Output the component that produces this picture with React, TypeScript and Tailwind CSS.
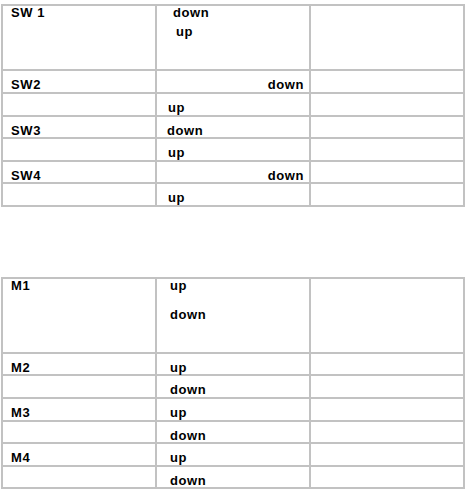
const cell = "bg-white";

function Lines({ children, className = "" }: { children?: React.ReactNode; className?: string }) {
  return <div className={`${cell} ${className}`}>{children}</div>;
}

export default function App() {
  return (
    <div className="w-[466px] h-[489px] bg-white font-['Liberation_Sans',Arial,sans-serif] text-[13px] leading-[13px] font-bold tracking-[0.6px] text-black">
      {/* switches */}
      <div className="ml-[1px] mt-[4px] w-[464px] grid grid-cols-[152px_152px_152px] grid-rows-[63px_21px_21px_20px_21px_20px_21px] gap-[2px] p-[2px] bg-[#c2c2c2]">
        <Lines className="pl-[8px]">SW 1</Lines>
        <Lines className="flex flex-col">
          <span className="pl-[16px]">down</span>
          <span className="pl-[19px] mt-[6px]">up</span>
        </Lines>
        <Lines />

        <Lines className="pl-[8px] pt-[7px]">SW2</Lines>
        <Lines className="pr-[5px] pt-[7px] text-right">down</Lines>
        <Lines />

        <Lines />
        <Lines className="pl-[11px] pt-[7px]">up</Lines>
        <Lines />

        <Lines className="pl-[8px] pt-[7px]">SW3</Lines>
        <Lines className="pl-[10px] pt-[7px]">down</Lines>
        <Lines />

        <Lines />
        <Lines className="pl-[11px] pt-[7px]">up</Lines>
        <Lines />

        <Lines className="pl-[8px] pt-[7px]">SW4</Lines>
        <Lines className="pr-[5px] pt-[7px] text-right">down</Lines>
        <Lines />

        <Lines />
        <Lines className="pl-[11px] pt-[7px]">up</Lines>
        <Lines />
      </div>

      {/* motors */}
      <div className="ml-[1px] mt-[70px] w-[464px] grid grid-cols-[152px_152px_152px] grid-rows-[73px_20px_21px_21px_20px_21px_20px] gap-[2px] p-[2px] bg-[#c2c2c2]">
        <Lines className="pl-[8px]">M1</Lines>
        <Lines className="flex flex-col pl-[13px]">
          <span>up</span>
          <span className="mt-[16px]">down</span>
        </Lines>
        <Lines />

        <Lines className="pl-[8px] pt-[7px]">M2</Lines>
        <Lines className="pl-[13px] pt-[7px]">up</Lines>
        <Lines />

        <Lines />
        <Lines className="pl-[13px] pt-[7px]">down</Lines>
        <Lines />

        <Lines className="pl-[8px] pt-[7px]">M3</Lines>
        <Lines className="pl-[13px] pt-[7px]">up</Lines>
        <Lines />

        <Lines />
        <Lines className="pl-[13px] pt-[7px]">down</Lines>
        <Lines />

        <Lines className="pl-[8px] pt-[7px]">M4</Lines>
        <Lines className="pl-[13px] pt-[7px]">up</Lines>
        <Lines />

        <Lines />
        <Lines className="pl-[13px] pt-[7px]">down</Lines>
        <Lines />
      </div>
    </div>
  );
}
